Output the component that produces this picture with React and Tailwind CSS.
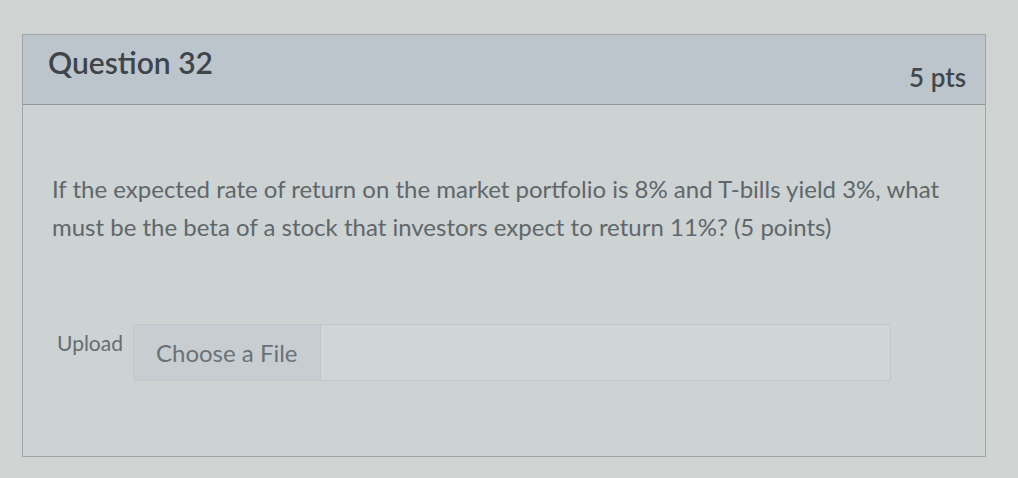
import React from 'react';

const QuestionCard = () => {
    return (
        <div className="w-[964px] border border-[#9ea4a7] bg-[#cdd2d2]">
            {/* --- Header --- */}
            <div className="h-[70px] flex justify-between bg-[#bcc5cb] border-b border-[#8e969a] pl-[25px] pr-[19px]">
                <h2 className="pt-[9px] text-[30px] leading-[36px] font-semibold text-[#3e4449]">Question 32</h2>
                <div className="pt-[26px] text-[26px] leading-[32px] font-semibold text-[#41474b]">5 pts</div>
            </div>

            {/* --- Body --- */}
            <div className="pl-[29px] pr-[20px] pt-[65px] pb-[75px]">
                <p className="text-[24px] leading-[38px] text-[#60676b]">
                    If the expected rate of return on the market portfolio is 8% and T-bills yield 3%, what<br />
                    must be the beta of a stock that investors expect to return 11%? (5 points)
                </p>
                <div className="mt-[78px] flex items-start gap-[10px] pl-[5px]">
                    <span className="pt-[5px] text-[21px] leading-[28px] text-[#666d71]">Upload</span>
                    <div className="w-[758px] h-[57px] flex border border-[#c2c7c9] bg-[#d0d5d5] rounded-[2px]">
                        <div className="w-[187px] flex items-center pl-[22px] bg-[#c7cdd0] border-r border-[#c0c5c8] text-[24px] text-[#6b7277]">
                            Choose a File
                        </div>
                    </div>
                </div>
            </div>
        </div>
    );
};

export default function App() {
    return (
        <div className="w-[1018px] h-[478px] overflow-hidden bg-[#cfd3d2] pt-[34px] pl-[22px]" style={{ fontFamily: 'Lato, "Open Sans", sans-serif' }}>
            <QuestionCard />
        </div>
    );
}
